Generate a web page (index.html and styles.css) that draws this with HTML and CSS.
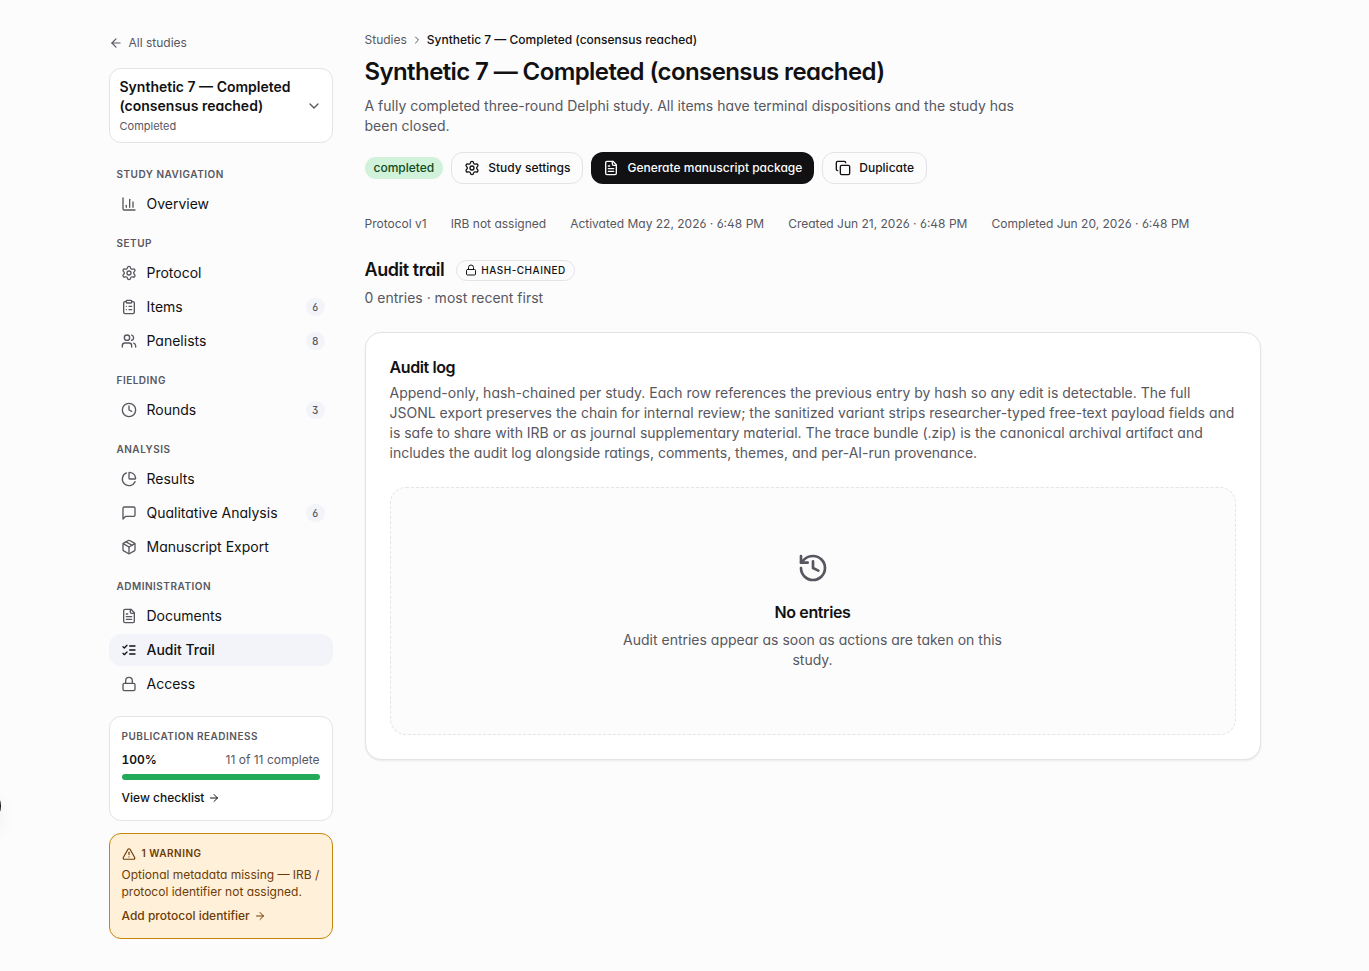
FILE: index.html
```html
<!DOCTYPE html>
<html lang="en">

<head>
  <meta charset="UTF-8">
  <meta name="viewport" content="width=device-width, initial-scale=1.0">
  <title>Audit Trail</title>
  <link rel="stylesheet" href="styles.css">
</head>

<body>
  <!-- Icon sprite -->
  <svg class="sprite" aria-hidden="true">
    <symbol id="arrow-left" viewBox="0 0 24 24"><path d="m12 19-7-7 7-7"/><path d="M19 12H5"/></symbol>
    <symbol id="arrow-right" viewBox="0 0 24 24"><path d="M5 12h14"/><path d="m12 5 7 7-7 7"/></symbol>
    <symbol id="chevron-down" viewBox="0 0 24 24"><path d="m6 9 6 6 6-6"/></symbol>
    <symbol id="chevron-right" viewBox="0 0 24 24"><path d="m9 18 6-6-6-6"/></symbol>
    <symbol id="chart" viewBox="0 0 24 24"><path d="M3 3v16a2 2 0 0 0 2 2h16"/><path d="M18 17V9"/><path d="M13 17V5"/><path d="M8 17v-3"/></symbol>
    <symbol id="settings" viewBox="0 0 24 24"><path d="M9.671 4.136a2.34 2.34 0 0 1 4.659 0 2.34 2.34 0 0 0 3.319 1.915 2.34 2.34 0 0 1 2.33 4.033 2.34 2.34 0 0 0 0 3.831 2.34 2.34 0 0 1-2.33 4.033 2.34 2.34 0 0 0-3.319 1.915 2.34 2.34 0 0 1-4.659 0 2.34 2.34 0 0 0-3.32-1.915 2.34 2.34 0 0 1-2.33-4.033 2.34 2.34 0 0 0 0-3.831A2.34 2.34 0 0 1 6.35 6.051a2.34 2.34 0 0 0 3.319-1.915"/><circle cx="12" cy="12" r="3"/></symbol>
    <symbol id="clipboard" viewBox="0 0 24 24"><rect width="8" height="4" x="8" y="2" rx="1"/><path d="M16 4h2a2 2 0 0 1 2 2v14a2 2 0 0 1-2 2H6a2 2 0 0 1-2-2V6a2 2 0 0 1 2-2h2"/><path d="M12 11h4"/><path d="M12 16h4"/><path d="M8 11h.01"/><path d="M8 16h.01"/></symbol>
    <symbol id="users" viewBox="0 0 24 24"><path d="M16 21v-2a4 4 0 0 0-4-4H6a4 4 0 0 0-4 4v2"/><path d="M16 3.128a4 4 0 0 1 0 7.744"/><path d="M22 21v-2a4 4 0 0 0-3-3.87"/><circle cx="9" cy="7" r="4"/></symbol>
    <symbol id="clock" viewBox="0 0 24 24"><circle cx="12" cy="12" r="10"/><path d="M12 6v6l4 2"/></symbol>
    <symbol id="pie" viewBox="0 0 24 24"><path d="M21 12c.552 0 1.005-.449.95-.998a10 10 0 0 0-8.953-8.951c-.55-.055-.998.398-.998.95v8a1 1 0 0 0 1 1z"/><path d="M21.21 15.89A10 10 0 1 1 8 2.83"/></symbol>
    <symbol id="message" viewBox="0 0 24 24"><path d="M21 15a2 2 0 0 1-2 2H7l-4 4V5a2 2 0 0 1 2-2h14a2 2 0 0 1 2 2z"/></symbol>
    <symbol id="package" viewBox="0 0 24 24"><path d="M11 21.73a2 2 0 0 0 2 0l7-4A2 2 0 0 0 21 16V8a2 2 0 0 0-1-1.73l-7-4a2 2 0 0 0-2 0l-7 4A2 2 0 0 0 3 8v8a2 2 0 0 0 1 1.73z"/><path d="M12 22V12"/><path d="M3.29 7 12 12l8.71-5"/><path d="m7.5 4.27 9 5.15"/></symbol>
    <symbol id="file" viewBox="0 0 24 24"><path d="M15 2H6a2 2 0 0 0-2 2v16a2 2 0 0 0 2 2h12a2 2 0 0 0 2-2V7Z"/><path d="M14 2v4a2 2 0 0 0 2 2h4"/><path d="M10 9H8"/><path d="M16 13H8"/><path d="M16 17H8"/></symbol>
    <symbol id="list-checks" viewBox="0 0 24 24"><path d="m3 17 2 2 4-4"/><path d="m3 7 2 2 4-4"/><path d="M13 6h8"/><path d="M13 12h8"/><path d="M13 18h8"/></symbol>
    <symbol id="lock" viewBox="0 0 24 24"><rect width="18" height="11" x="3" y="11" rx="2"/><path d="M7 11V7a5 5 0 0 1 10 0v4"/></symbol>
    <symbol id="copy" viewBox="0 0 24 24"><rect width="14" height="14" x="8" y="8" rx="2"/><path d="M4 16c-1.1 0-2-.9-2-2V4c0-1.1.9-2 2-2h10c1.1 0 2 .9 2 2"/></symbol>
    <symbol id="history" viewBox="0 0 24 24"><path d="M3 12a9 9 0 1 0 9-9 9.75 9.75 0 0 0-6.74 2.74L3 8"/><path d="M3 3v5h5"/><path d="M12 7v5l4 2"/></symbol>
    <symbol id="warning" viewBox="0 0 24 24"><path d="m21.73 18-8-14a2 2 0 0 0-3.48 0l-8 14A2 2 0 0 0 4 21h16a2 2 0 0 0 1.73-3"/><path d="M12 9v4"/><path d="M12 17h.01"/></symbol>
  </svg>

  <div class="page">
    <aside class="sidebar">
      <a class="back" href="#"><svg class="icon icon-sm"><use href="#arrow-left"/></svg>All studies</a>

      <button class="switcher" type="button">
        <span class="switcher-text">
          <span class="switcher-name">Synthetic 7 — Completed (consensus reached)</span>
          <span class="switcher-status">Completed</span>
        </span>
        <svg class="icon"><use href="#chevron-down"/></svg>
      </button>

      <nav class="nav" aria-label="Study">
        <section class="nav-group">
          <h2 class="label">Study navigation</h2>
          <a class="nav-item" href="#"><svg class="icon"><use href="#chart"/></svg>Overview</a>
        </section>
        <section class="nav-group">
          <h2 class="label">Setup</h2>
          <a class="nav-item" href="#"><svg class="icon"><use href="#settings"/></svg>Protocol</a>
          <a class="nav-item" href="#"><svg class="icon"><use href="#clipboard"/></svg>Items<span class="count">6</span></a>
          <a class="nav-item" href="#"><svg class="icon"><use href="#users"/></svg>Panelists<span class="count">8</span></a>
        </section>
        <section class="nav-group">
          <h2 class="label">Fielding</h2>
          <a class="nav-item" href="#"><svg class="icon"><use href="#clock"/></svg>Rounds<span class="count">3</span></a>
        </section>
        <section class="nav-group">
          <h2 class="label">Analysis</h2>
          <a class="nav-item" href="#"><svg class="icon"><use href="#pie"/></svg>Results</a>
          <a class="nav-item" href="#"><svg class="icon"><use href="#message"/></svg>Qualitative Analysis<span class="count">6</span></a>
          <a class="nav-item" href="#"><svg class="icon"><use href="#package"/></svg>Manuscript Export</a>
        </section>
        <section class="nav-group">
          <h2 class="label">Administration</h2>
          <a class="nav-item" href="#"><svg class="icon"><use href="#file"/></svg>Documents</a>
          <a class="nav-item active" href="#" aria-current="page"><svg class="icon"><use href="#list-checks"/></svg>Audit Trail</a>
          <a class="nav-item" href="#"><svg class="icon"><use href="#lock"/></svg>Access</a>
        </section>
      </nav>

      <section class="panel readiness">
        <h2 class="label">Publication readiness</h2>
        <div class="readiness-row"><strong>100%</strong><span>11 of 11 complete</span></div>
        <div class="bar"><div class="bar-fill" style="width: 100%"></div></div>
        <a class="panel-link" href="#">View checklist<svg class="icon icon-xs"><use href="#arrow-right"/></svg></a>
      </section>

      <section class="panel warning">
        <h2 class="label"><svg class="icon icon-sm"><use href="#warning"/></svg>1 warning</h2>
        <p>Optional metadata missing — IRB / protocol identifier not assigned.</p>
        <a class="panel-link" href="#">Add protocol identifier<svg class="icon icon-xs"><use href="#arrow-right"/></svg></a>
      </section>
    </aside>

    <main class="main">
      <nav class="breadcrumb" aria-label="Breadcrumb">
        <a href="#">Studies</a>
        <svg class="icon icon-xs"><use href="#chevron-right"/></svg>
        <span>Synthetic 7 — Completed (consensus reached)</span>
      </nav>
      <h1>Synthetic 7 — Completed (consensus reached)</h1>
      <p class="intro">A fully completed three-round Delphi study. All items have terminal dispositions and the study has been closed.</p>

      <div class="actions">
        <span class="status">completed</span>
        <button class="btn" type="button"><svg class="icon"><use href="#settings"/></svg>Study settings</button>
        <button class="btn btn-primary" type="button"><svg class="icon"><use href="#file"/></svg>Generate manuscript package</button>
        <button class="btn" type="button"><svg class="icon"><use href="#copy"/></svg>Duplicate</button>
      </div>

      <div class="meta">
        <span>Protocol v1</span>
        <span>IRB not assigned</span>
        <span>Activated May 22, 2026 · 6:48 PM</span>
        <span>Created Jun 21, 2026 · 6:48 PM</span>
        <span>Completed Jun 20, 2026 · 6:48 PM</span>
      </div>

      <div class="section-head">
        <h2>Audit trail</h2>
        <span class="chip"><svg class="icon icon-xs"><use href="#lock"/></svg>Hash-chained</span>
      </div>
      <p class="section-sub">0 entries · most recent first</p>

      <section class="card">
        <h3>Audit log</h3>
        <p>Append-only, hash-chained per study. Each row references the previous entry by hash so any edit is detectable. The full JSONL export preserves the chain for internal review; the sanitized variant strips researcher-typed free-text payload fields and is safe to share with IRB or as journal supplementary material. The trace bundle (.zip) is the canonical archival artifact and includes the audit log alongside ratings, comments, themes, and per-AI-run provenance.</p>
        <div class="empty">
          <svg class="icon icon-lg"><use href="#history"/></svg>
          <h4>No entries</h4>
          <p>Audit entries appear as soon as actions are taken on this study.</p>
        </div>
      </section>
    </main>
  </div>

  <button class="drawer-handle" type="button" aria-label="Open panel"></button>
</body>

</html>
```
FILE: styles.css
```css
:root {
  --bg: #fcfcfc;
  --text: #111113;
  --muted: #57575f;
  --border: #e3e3e8;
  --soft: #f3f4f9;
}

* {
  box-sizing: border-box;
}

body {
  margin: 0;
  background: var(--bg);
  color: var(--text);
  font-family: Inter, "Liberation Sans", sans-serif;
  font-size: 14px;
  line-height: 20px;
  font-feature-settings: "cv11", "ss01";
}

h1, h2, h3, h4, p {
  margin: 0;
}

a {
  color: inherit;
  text-decoration: none;
}

button {
  font: inherit;
  font-feature-settings: inherit;
  color: inherit;
  cursor: pointer;
}

.sprite {
  display: none;
}

.icon {
  flex: none;
  width: 16px;
  height: 16px;
  fill: none;
  stroke: currentColor;
  stroke-width: 2;
  stroke-linecap: round;
  stroke-linejoin: round;
}

.icon-xs {
  width: 12px;
  height: 12px;
}

.icon-sm {
  width: 14px;
  height: 14px;
}

.icon-lg {
  width: 32px;
  height: 32px;
}

.page {
  display: grid;
  grid-template-columns: 224px minmax(0, 1fr);
  gap: 32px;
  max-width: 1152px;
  margin: 0 auto;
  padding: 32px 0;
}

/* Sidebar */
.back {
  display: flex;
  align-items: center;
  gap: 6px;
  margin-bottom: 14px;
  color: var(--muted);
  font-size: 12px;
  line-height: 22px;
}

.switcher {
  display: flex;
  align-items: center;
  gap: 8px;
  width: 100%;
  padding: 8px 10px;
  background: white;
  border: 1px solid var(--border);
  border-radius: 12px;
  text-align: left;
}

.switcher .icon {
  color: var(--muted);
}

.switcher-text {
  flex: 1;
}

.switcher-name,
.switcher-status {
  display: block;
}

.switcher-name {
  font-weight: 600;
  line-height: 19px;
}

.switcher-status {
  margin-top: 4px;
  color: var(--muted);
  font-size: 11px;
  line-height: 15px;
}

.nav {
  display: flex;
  flex-direction: column;
  gap: 16px;
  margin: 24px 0 16px;
}

.nav-group {
  display: flex;
  flex-direction: column;
  gap: 2px;
}

.label {
  color: var(--muted);
  font-size: 10px;
  font-weight: 600;
  line-height: 15px;
  letter-spacing: 0.05em;
  text-transform: uppercase;
}

.nav-group .label {
  padding: 0 8px 4px;
}

.nav-item {
  display: flex;
  align-items: center;
  gap: 10px;
  height: 32px;
  padding: 0 8px 0 12px;
  border-radius: 12px;
}

.nav-item .icon {
  color: var(--muted);
}

.nav-item.active {
  background: var(--soft);
  font-weight: 500;
}

.nav-item.active .icon {
  color: var(--text);
}

.count {
  min-width: 18px;
  margin-left: auto;
  padding: 0 6px;
  background: var(--soft);
  border-radius: 9px;
  color: var(--muted);
  font-size: 10px;
  font-weight: 500;
  font-variant-numeric: tabular-nums;
  line-height: 18px;
  text-align: center;
}

.panel {
  padding: 12px;
  background: white;
  border: 1px solid var(--border);
  border-radius: 12px;
  font-size: 12px;
}

.readiness-row {
  display: flex;
  justify-content: space-between;
  margin: 8px 0 6px;
  color: var(--muted);
  line-height: 16px;
}

.readiness-row strong {
  color: var(--text);
  font-weight: 600;
  font-variant-numeric: tabular-nums;
}

.bar {
  height: 6px;
  background: var(--soft);
  border-radius: 3px;
  overflow: hidden;
}

.bar-fill {
  height: 100%;
  background: #22a959;
}

.panel-link {
  display: flex;
  align-items: center;
  gap: 4px;
  margin-top: 8px;
  font-weight: 500;
}

.warning {
  margin-top: 12px;
  background: #fff0d9;
  border-color: #c6860c;
  color: #6d3c05;
}

.warning .label {
  display: flex;
  align-items: center;
  gap: 6px;
  margin-bottom: 5px;
  color: inherit;
}

.warning p {
  line-height: 17px;
}

.warning .panel-link {
  margin-top: 6px;
}

/* Study header */
.breadcrumb {
  display: flex;
  align-items: center;
  gap: 4px;
  color: var(--muted);
  font-size: 12px;
  line-height: 16px;
}

.breadcrumb span {
  color: var(--text);
  font-weight: 500;
}

h1 {
  margin: 8px 0;
  font-size: 24px;
  font-weight: 600;
  font-variation-settings: "opsz" 24;
  line-height: 32px;
  letter-spacing: -0.025em;
}

.intro {
  max-width: 672px;
  color: var(--muted);
}

.actions {
  display: flex;
  flex-wrap: wrap;
  align-items: center;
  gap: 8px;
  margin: 16px 0 32px;
}

.status {
  padding: 0 9px;
  background: #d0f2da;
  border-radius: 11px;
  color: #0f4a20;
  font-size: 12px;
  font-weight: 500;
  line-height: 22px;
}

.btn {
  display: flex;
  align-items: center;
  gap: 8px;
  height: 32px;
  padding: 0 12px;
  background: var(--bg);
  border: 1px solid var(--border);
  border-radius: 12px;
  font-size: 12px;
  font-weight: 500;
}

.btn-primary {
  background: var(--text);
  border: 0;
  color: var(--bg);
}

.meta {
  display: flex;
  flex-wrap: wrap;
  gap: 4px 24px;
  color: var(--muted);
  font-size: 12px;
  line-height: 16px;
}

/* Audit trail */
.section-head {
  display: flex;
  align-items: center;
  gap: 12px;
  margin: 24px 0 4px;
}

.section-head h2 {
  font-size: 18px;
  font-weight: 600;
  font-variation-settings: "opsz" 18;
  line-height: 28px;
  letter-spacing: -0.025em;
}

.chip {
  display: flex;
  align-items: center;
  gap: 4px;
  padding: 2px 8px;
  border: 1px solid var(--border);
  border-radius: 11px;
  font-size: 10px;
  font-weight: 500;
  line-height: 15px;
  letter-spacing: 0.05em;
  text-transform: uppercase;
}

.section-sub {
  color: var(--muted);
}

.card {
  margin-top: 24px;
  padding: 24px;
  background: white;
  border: 1px solid var(--border);
  border-radius: 16px;
  box-shadow: 0 1px 2px rgba(0, 0, 0, 0.08);
}

.card h3,
.card h4 {
  font-size: 16px;
  font-weight: 600;
  letter-spacing: -0.025em;
}

.card h3 {
  margin-bottom: 6px;
}

.card p {
  color: var(--muted);
}

.empty {
  display: flex;
  flex-direction: column;
  align-items: center;
  margin-top: 24px;
  padding: 64px 24px;
  background: var(--bg);
  border: 1px dashed var(--border);
  border-radius: 16px;
  text-align: center;
}

.empty .icon {
  color: var(--muted);
}

.empty h4 {
  margin: 16px 0 6px;
  line-height: 24px;
}

.empty p {
  max-width: 384px;
}

/* Collapsed drawer handle, only its edge shows */
.drawer-handle {
  position: fixed;
  bottom: 147px;
  left: -35px;
  width: 36px;
  height: 36px;
  padding: 0;
  background: var(--text);
  border: 0;
  border-radius: 50%;
  box-shadow: 0 10px 20px rgba(0, 0, 0, 0.06);
}
```
